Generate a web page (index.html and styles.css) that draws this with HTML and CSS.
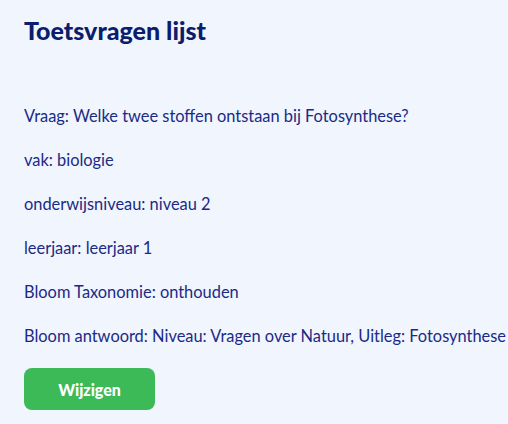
FILE: index.html
```html
<!DOCTYPE html>
<html lang="nl">
<head>
<meta charset="utf-8">
<title>Toetsvragen lijst</title>
<link rel="stylesheet" href="styles.css">
</head>
<body>
<main class="page">
  <h1 class="title">Toetsvragen lijst</h1>
  <section class="question">
    <p class="field">Vraag: Welke twee stoffen ontstaan bij Fotosynthese?</p>
    <p class="field">vak: biologie</p>
    <p class="field">onderwijsniveau: niveau 2</p>
    <p class="field">leerjaar: leerjaar 1</p>
    <p class="field">Bloom Taxonomie: onthouden</p>
    <p class="field">Bloom antwoord: Niveau: Vragen over Natuur, Uitleg: Fotosynthese</p>
    <button class="btn" type="button">Wijzigen</button>
  </section>
</main>
</body>
</html>
```
FILE: styles.css
```css
html, body {
  margin: 0;
  background: #f0f5fe;
}
body {
  font-family: Lato, "Noto Sans", sans-serif;
  color: #1a2a85;
}
.page {
  padding: 14px 0 0 24px;
}
.title {
  margin: 0;
  font-size: 25px;
  line-height: 32px;
  font-weight: 900;
  color: #0b1d6c;
}
.question {
  padding-top: 36px;
}
.field {
  margin: 24px 0 0;
  font-size: 16.4px;
  line-height: 20px;
  white-space: nowrap;
}
.btn {
  display: block;
  margin-top: 22px;
  width: 131px;
  height: 42px;
  border: 0;
  border-radius: 8px;
  background: #3cba58;
  color: #fff;
  font-family: inherit;
  font-size: 16px;
  font-weight: 900;
}
```
